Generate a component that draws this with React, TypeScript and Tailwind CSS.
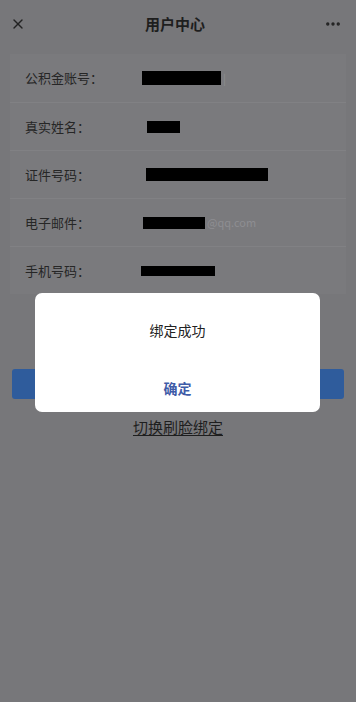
import { X, MoreHorizontal } from "lucide-react";

type Row = {
  label: string;
  barWidth: number;
  barOffset: number;
  barHeight: number;
  suffix?: string;
};

const rows: Row[] = [
  { label: "公积金账号：", barWidth: 79, barOffset: 0, barHeight: 14, suffix: "|" },
  { label: "真实姓名：", barWidth: 33, barOffset: 5, barHeight: 12 },
  { label: "证件号码：", barWidth: 122, barOffset: 4, barHeight: 13 },
  { label: "电子邮件：", barWidth: 62, barOffset: 1, barHeight: 12, suffix: "@qq.com" },
  { label: "手机号码：", barWidth: 74, barOffset: -1, barHeight: 10 },
];

const font = { fontFamily: '"Noto Sans CJK SC", "Noto Sans", sans-serif' };

const App = () => {
  return (
    <div className="relative w-[356px] h-[702px] overflow-hidden bg-[#77777a]" style={font}>
      {/* header */}
      <div className="flex items-center justify-between h-[48px] pl-[10px] pr-[14px]">
        <X size={16} strokeWidth={2} className="text-[#222]" />
        <span className="text-[15px] font-semibold text-[#1e1e1e]">用户中心</span>
        <MoreHorizontal size={18} strokeWidth={2.5} className="text-[#222]" />
      </div>

      {/* info list */}
      <div className="mx-[10px] mt-[6px] bg-[#7a7a7d] flex flex-col">
        {rows.map((r, i) => (
          <div
            key={r.label}
            className={`flex items-center h-[48px] pl-[15px] ${i > 0 ? "border-t border-[#818184]" : ""}`}
          >
            <span className="w-[117px] text-[13px] text-[#262626]">{r.label}</span>
            <div className="flex items-center" style={{ marginLeft: r.barOffset }}>
              <div className="bg-black" style={{ width: r.barWidth, height: r.barHeight }} />
              {r.suffix && (
                <span className="ml-[2px] text-[11px] text-[#8e8e92]">{r.suffix}</span>
              )}
            </div>
          </div>
        ))}
      </div>

      {/* bind button */}
      <div className="mx-[12px] mt-[75px] h-[30px] rounded-[3px] bg-[#2f5c9c]" />

      <div className="flex justify-center mt-[17px]">
        <span className="text-[15px] text-[#1e1e1e] underline underline-offset-2">切换刷脸绑定</span>
      </div>

      {/* dialog */}
      <div className="absolute left-[35px] top-[293px] w-[285px] h-[119px] bg-white rounded-[7px] flex flex-col items-center">
        <span className="mt-[27px] text-[14px] text-[#222]">绑定成功</span>
        <span className="mt-[37px] text-[14px] font-bold text-[#3f5ca8]">确定</span>
      </div>
    </div>
  );
};

export default App;
